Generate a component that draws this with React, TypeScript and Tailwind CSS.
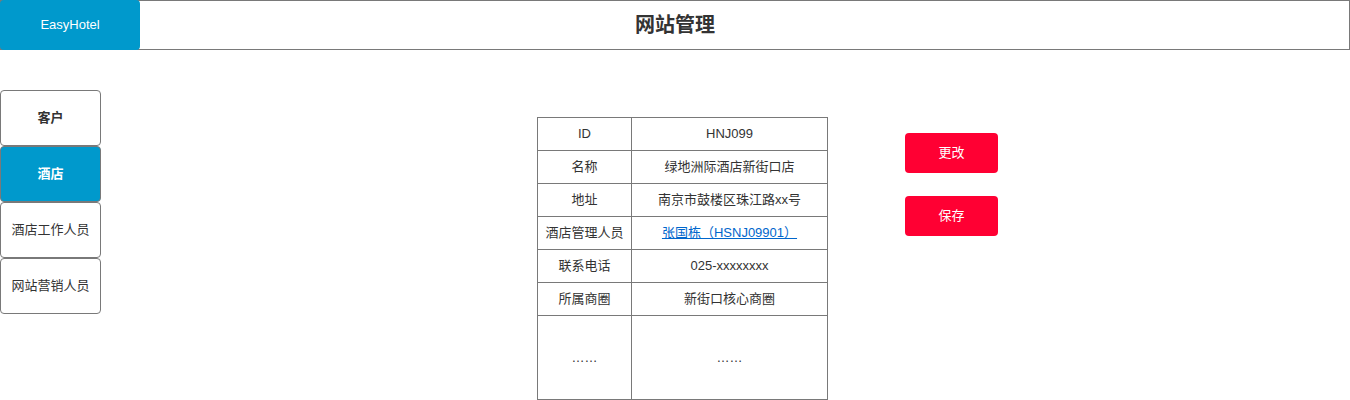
import React from "react";

const rows: { label: string; value: React.ReactNode; tall?: boolean }[] = [
  { label: "ID", value: "HNJ099" },
  { label: "名称", value: "绿地洲际酒店新街口店" },
  { label: "地址", value: "南京市鼓楼区珠江路xx号" },
  {
    label: "酒店管理人员",
    value: (
      <a href="#" className="text-[#0066cc] underline">
        张国栋（HSNJ09901）
      </a>
    ),
  },
  { label: "联系电话", value: "025-xxxxxxxx" },
  { label: "所属商圈", value: "新街口核心商圈" },
  { label: "……", value: "……", tall: true },
];

const menu = [
  { name: "客户", active: false, bold: true },
  { name: "酒店", active: true, bold: true },
  { name: "酒店工作人员", active: false, bold: false },
  { name: "网站营销人员", active: false, bold: false },
];

export default function App() {
  return (
    <div
      className="w-[1350px] h-[400px] bg-white text-[13px] text-[#333333] overflow-hidden"
      style={{ fontFamily: '"Liberation Sans", Arial, "Noto Sans CJK SC", sans-serif' }}
    >
      {/* Header */}
      <div className="flex h-[50px] border border-[#797979]">
        <div className="-ml-px -my-px h-[50px] w-[140px] shrink-0 rounded-[4px] bg-[#0099cc] flex items-center justify-center text-white">
          EasyHotel
        </div>
        <div className="flex-1 flex items-center justify-center text-[20px] font-bold text-[#333333]">
          网站管理
        </div>
        <div className="w-[139px] shrink-0" />
      </div>

      <div className="flex">
        {/* Sidebar */}
        <div className="mt-[40px] flex flex-col w-[101px] shrink-0">
          {menu.map((m) => (
            <div
              key={m.name}
              className={`h-[56px] flex items-center justify-center rounded-[4px] border border-[#797979] ${
                m.active ? "bg-[#0099cc] text-white" : "bg-white text-[#333333]"
              } ${m.bold ? "font-bold" : ""}`}
            >
              {m.name}
            </div>
          ))}
        </div>

        {/* Detail table */}
        <div className="ml-[436px] mt-[67px]">
          <table className="border-collapse">
            <tbody>
              {rows.map((r) => (
                <tr key={r.label} className={r.tall ? "h-[84px]" : "h-[33px]"}>
                  <td className="w-[94px] border border-[#797979] text-center p-0">{r.label}</td>
                  <td className="w-[196px] border border-[#797979] text-center p-0">{r.value}</td>
                </tr>
              ))}
            </tbody>
          </table>
        </div>

        {/* Actions */}
        <div className="ml-[77px] mt-[83px] flex flex-col gap-[23px]">
          <button className="w-[93px] h-[40px] rounded-[4px] bg-[#ff0033] text-white">更改</button>
          <button className="w-[93px] h-[40px] rounded-[4px] bg-[#ff0033] text-white">保存</button>
        </div>
      </div>
    </div>
  );
}
